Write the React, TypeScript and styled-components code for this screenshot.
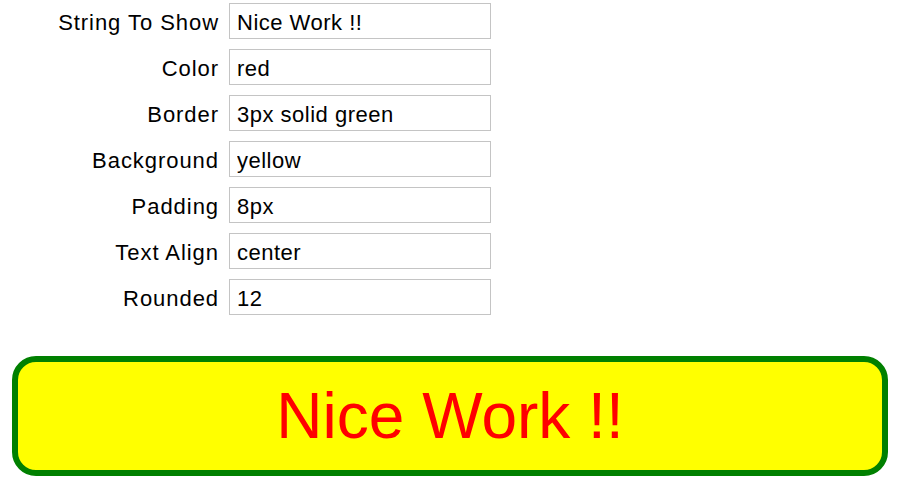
import React, { useState } from "react";
import styled, { createGlobalStyle } from "styled-components";

const GlobalStyle = createGlobalStyle`
  html, body {
    margin: 0;
    padding: 0;
    background: #ffffff;
    font-family: "Liberation Sans", Arial, sans-serif;
  }
`;

const Page = styled.div`
  padding: 3px 12px 0 12px;
  display: flex;
  flex-direction: column;
`;

const Form = styled.form`
  display: grid;
  grid-template-columns: 207px 262px;
  column-gap: 10px;
  row-gap: 10px;
`;

const Label = styled.label`
  font-size: 22px;
  letter-spacing: 0.95px;
  padding-top: 3px;
  color: #000;
  text-align: right;
  align-self: center;
  white-space: nowrap;
`;

const Field = styled.input`
  box-sizing: border-box;
  height: 36px;
  width: 262px;
  margin: 0;
  padding: 3px 7px 0 7px;
  border: 1px solid #c4c4c4;
  border-radius: 0;
  font-family: "Liberation Sans", Arial, sans-serif;
  font-size: 22px;
  letter-spacing: 0.5px;
  color: #000;
  outline: none;
`;

const Preview = styled.div<{
  $color: string;
  $border: string;
  $background: string;
  $padding: string;
  $align: string;
  $rounded: number;
}>`
  box-sizing: border-box;
  margin-top: 41px;
  width: 876px;
  height: 120px;
  display: flex;
  align-items: center;
  justify-content: center;
  font-size: 64px;
  line-height: 1;
  color: ${(p) => p.$color};
  border: ${(p) => p.$border};
  background: ${(p) => p.$background};
  padding: ${(p) => p.$padding};
  text-align: ${(p) => p.$align};
  border-radius: ${(p) => p.$rounded}px;
`;

// values shown are at 2x, so size numbers get doubled
const scale = (v: string) => v.replace(/(\d+)px/g, (_, n) => `${Number(n) * 2}px`);

export default function App() {
  const [text, setText] = useState("Nice Work !!");
  const [color, setColor] = useState("red");
  const [border, setBorder] = useState("3px solid green");
  const [background, setBackground] = useState("yellow");
  const [padding, setPadding] = useState("8px");
  const [align, setAlign] = useState("center");
  const [rounded, setRounded] = useState("12");

  const fields = [
    { label: "String To Show", value: text, set: setText },
    { label: "Color", value: color, set: setColor },
    { label: "Border", value: border, set: setBorder },
    { label: "Background", value: background, set: setBackground },
    { label: "Padding", value: padding, set: setPadding },
    { label: "Text Align", value: align, set: setAlign },
    { label: "Rounded", value: rounded, set: setRounded },
  ];

  return (
    <>
      <GlobalStyle />
      <Page>
        <Form onSubmit={(e) => e.preventDefault()}>
          {fields.map((f) => (
            <React.Fragment key={f.label}>
              <Label>{f.label}</Label>
              <Field value={f.value} onChange={(e) => f.set(e.target.value)} />
            </React.Fragment>
          ))}
        </Form>
        <Preview
          $color={color}
          $border={scale(border)}
          $background={background}
          $padding={scale(padding)}
          $align={align}
          $rounded={(Number(rounded) || 0) * 2}
        >
          {text}
        </Preview>
      </Page>
    </>
  );
}
